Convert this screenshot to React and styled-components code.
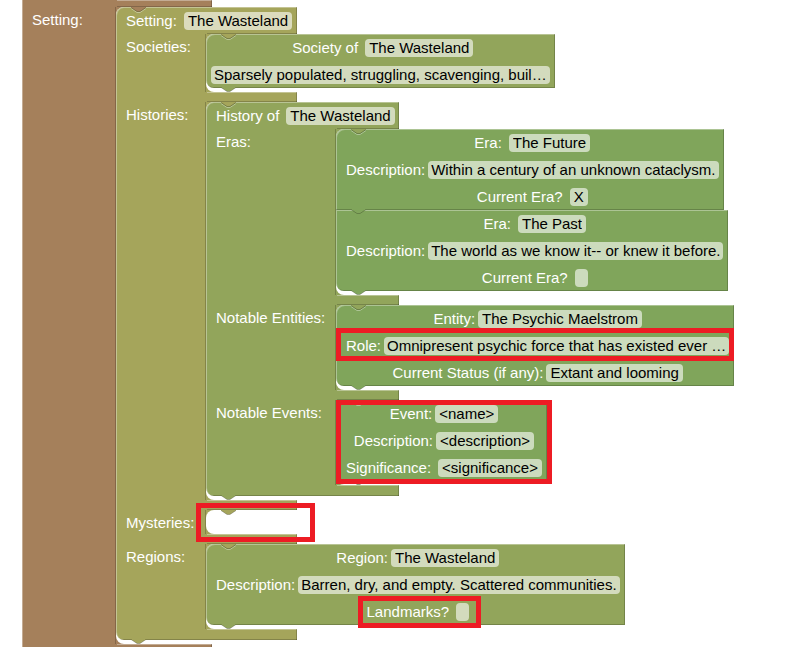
import React, { useId } from "react";
import styled, { createGlobalStyle } from "styled-components";

const BROWN = "#a5805b";
const OLIVE = "#a5a55b";
const MOSS = "#92a55b";
const GREEN = "#80a55b";

const LIGHT = "rgba(255, 255, 255, 0.35)";
const DARK = "rgba(0, 0, 0, 0.2)";

const line = (color, seam, edge) =>
  `linear-gradient(${color}, ${color}) ${seam}px ${edge} / 100% 1px no-repeat`;

const GlobalStyle = createGlobalStyle`
  * { box-sizing: border-box; }
  body {
    margin: 0;
    background: #fff;
    font-family: "Liberation Sans", Arial, sans-serif;
    font-size: 15px;
    line-height: 18px;
  }
`;

const Workspace = styled.main`
  height: 100vh;
  overflow: hidden;
  padding-left: 22px;
`;

const BlockBody = styled.section`
  display: flex;
  flex-direction: column;
  align-items: flex-start;
  position: relative;
`;

/* Horizontal arm of a block; its bevel starts to the right of the label column. */
const Bar = styled.div`
  width: ${(p) => p.$width}px;
  height: ${(p) => p.$height || 10}px;
  background:
    ${(p) => line(LIGHT, p.$seam, "top")},
    ${(p) => line(DARK, p.$last ? 0 : p.$seam, "bottom")},
    ${(p) => p.$color};
  box-shadow: inset -1px 0 ${DARK};
  border-left: 1px solid ${LIGHT};
  border-radius: ${(p) => (p.$last ? "0 0 0 8px" : "0")};
`;

const Header = styled.div`
  display: flex;
  align-items: center;
  width: ${(p) => p.$width}px;
  height: 27px;
  padding: 0 5px 0 9px;
  background:
    ${(p) => line(DARK, p.$seam, "bottom")},
    ${(p) => p.$color};
  border-left: 1px solid ${LIGHT};
  border-radius: 8px 0 0 0;
  box-shadow: inset -1px 0 ${DARK}, inset 0 1px ${LIGHT};
`;

const StatementRow = styled.div`
  display: flex;
  align-items: stretch;
`;

const StatementLabel = styled.div`
  flex: none;
  width: ${(p) => p.$width}px;
  padding: 4px 0 0 9px;
  color: #fff;
  white-space: nowrap;
  background: ${(p) => p.$color};
  border-left: 1px solid ${LIGHT};
  border-right: 1px solid ${DARK};
`;

const SlotFrame = styled.div`
  position: relative;
  background: linear-gradient(90deg, ${(p) => p.$color} 8px, transparent 8px);
`;

const SlotSpace = styled.div`
  min-width: 91px;
  min-height: 24px;
  padding-bottom: ${(p) => (p.$empty ? 0 : 4)}px;
  background: #fff;
  border-radius: 8px 0 0 8px;
`;

const LeafBody = styled.section`
  position: relative;
  width: fit-content;
  background: ${(p) => p.$color};
  border-radius: ${(p) => (p.$stackedBelow ? 0 : 8)}px 0 0 ${(p) => (p.$stackedAbove ? 0 : 8)}px;
  box-shadow: inset -1px -1px ${DARK}, inset 1px 1px ${LIGHT};
`;

const FieldRow = styled.div`
  display: flex;
  justify-content: center;
  align-items: center;
  height: 27px;
  padding: 0 5px 0 ${(p) => (p.$bare ? 5 : 10)}px;
  position: relative;
`;

const FieldGroup = styled.div`
  display: flex;
  align-items: center;
  gap: ${(p) => (p.$wide ? 7 : 3)}px;
  position: relative;
`;

const FieldLabel = styled.label`
  color: #fff;
  white-space: nowrap;
`;

const FieldInput = styled.input`
  field-sizing: content;
  height: 18px;
  min-width: 13px;
  margin: 0;
  padding: 0 ${(p) => (p.$long ? 3 : 4)}px;
  border: 0;
  border-radius: 4px;
  background: rgba(255, 255, 255, 0.6);
  color: #000;
  font: inherit;
`;

const NotchSvg = styled.svg`
  position: absolute;
  left: 15px;
  width: 15px;
  height: 6px;
  ${(p) => (p.$bottom ? "top: calc(100% - 1px);" : "top: 0;")}
  z-index: 1;
`;

const Highlight = styled.div`
  position: absolute;
  inset: ${(p) => p.$inset};
  border: 5px solid #ed1c24;
  pointer-events: none;
  z-index: 2;
`;

function Connector({ color, bottom }) {
  return (
    <NotchSvg $bottom={bottom} viewBox="0 0 15 6" aria-hidden="true">
      {!bottom && <path d="M0 1.5 L6 5.5 H9 L15 1.5" fill="none" stroke="#fff" strokeOpacity="0.35" />}
      <path d="M0 0 H15 V0.5 L9 4.5 H6 L0 0.5 Z" fill={color} />
      <path d="M0 0.5 L6 4.5 H9 L15 0.5" fill="none" stroke="#000" strokeOpacity="0.22" />
    </NotchSvg>
  );
}

function Field({ label, value, wide, highlight }) {
  const id = useId();
  return (
    <FieldGroup $wide={wide}>
      {label && <FieldLabel htmlFor={id}>{label}</FieldLabel>}
      <FieldInput
        id={id}
        defaultValue={value}
        $long={value.length > 40}
        aria-label={label ? undefined : "Description"}
      />
      {highlight && <Highlight $inset={highlight} />}
    </FieldGroup>
  );
}

function Leaf({ color, fields, stackedAbove, stackedBelow, highlight }) {
  return (
    <LeafBody $color={color} $stackedAbove={stackedAbove} $stackedBelow={stackedBelow}>
      {fields.map((f, i) => (
        <FieldRow key={i} $bare={!f.label}>
          <Field {...f} />
          {f.rowHighlight && <Highlight $inset={f.rowHighlight} />}
        </FieldRow>
      ))}
      <Connector color={color} bottom />
      {highlight && <Highlight $inset={highlight} />}
    </LeafBody>
  );
}

function Statement({ label, color, labelWidth, highlight, children }) {
  return (
    <StatementRow>
      <StatementLabel $color={color} $width={labelWidth}>{label}</StatementLabel>
      <SlotFrame $color={color}>
        <SlotSpace $empty={!children}>{children}</SlotSpace>
        <Connector color={color} />
        {highlight && <Highlight $inset={highlight} />}
      </SlotFrame>
    </StatementRow>
  );
}

function HistoryBlock() {
  const row = { color: MOSS, labelWidth: 130 };
  const arm = { $color: MOSS, $width: 193, $seam: 130 };
  return (
    <BlockBody>
      <Header {...arm}>
        <Field label="History of" value="The Wasteland" wide />
      </Header>
      <Statement {...row} label="Eras:">
        <Leaf
          color={GREEN}
          stackedAbove
          fields={[
            { label: "Era:", value: "The Future", wide: true },
            { label: "Description:", value: "Within a century of an unknown cataclysm." },
            { label: "Current Era?", value: "X", wide: true },
          ]}
        />
        <Leaf
          color={GREEN}
          stackedBelow
          fields={[
            { label: "Era:", value: "The Past", wide: true },
            { label: "Description:", value: "The world as we know it-- or knew it before." },
            { label: "Current Era?", value: "", wide: true },
          ]}
        />
      </Statement>
      <Bar {...arm} />
      <Statement {...row} label="Notable Entities:">
        <Leaf
          color={GREEN}
          fields={[
            { label: "Entity:", value: "The Psychic Maelstrom" },
            {
              label: "Role:",
              value: "Omnipresent psychic force that has existed ever …",
              rowHighlight: "-4px 0 -2px 0",
            },
            { label: "Current Status (if any):", value: "Extant and looming" },
          ]}
        />
      </Statement>
      <Bar {...arm} />
      <Statement {...row} label="Notable Events:">
        <Leaf
          color={GREEN}
          highlight="0 -5px -3px 0"
          fields={[
            { label: "Event:", value: "<name>" },
            { label: "Description:", value: "<description>" },
            { label: "Significance:", value: "<significance>", wide: true },
          ]}
        />
      </Statement>
      <Bar {...arm} $height={11} $last />
      <Connector color={MOSS} bottom />
    </BlockBody>
  );
}

function SettingBlock() {
  const row = { color: OLIVE, labelWidth: 90 };
  const arm = { $color: OLIVE, $width: 181, $seam: 90 };
  return (
    <BlockBody>
      <Header {...arm}>
        <Field label="Setting:" value="The Wasteland" wide />
      </Header>
      <Statement {...row} label="Societies:">
        <Leaf
          color={MOSS}
          fields={[
            { label: "Society of", value: "The Wasteland", wide: true },
            { value: "Sparsely populated, struggling, scavenging, buil…" },
          ]}
        />
      </Statement>
      <Bar {...arm} />
      <Statement {...row} label="Histories:">
        <HistoryBlock />
      </Statement>
      <Bar {...arm} />
      <Statement {...row} label="Mysteries:" highlight="-7px -18px -8px -10px" />
      <Bar {...arm} />
      <Statement {...row} label="Regions:">
        <Leaf
          color={MOSS}
          fields={[
            { label: "Region:", value: "The Wasteland" },
            { label: "Description:", value: "Barren, dry, and empty. Scattered communities." },
            { label: "Landmarks?", value: "", wide: true, highlight: "-7px -12px -7px -9px" },
          ]}
        />
      </Statement>
      <Bar {...arm} $height={11} $last />
      <Connector color={OLIVE} bottom />
    </BlockBody>
  );
}

export default function App() {
  return (
    <Workspace>
      <GlobalStyle />
      <BlockBody>
        <Bar $color={BROWN} $width={190} $height={7} $seam={94} />
        <Statement color={BROWN} labelWidth={94} label="Setting:">
          <SettingBlock />
        </Statement>
        <Bar $color={BROWN} $width={190} $seam={94} />
      </BlockBody>
    </Workspace>
  );
}
